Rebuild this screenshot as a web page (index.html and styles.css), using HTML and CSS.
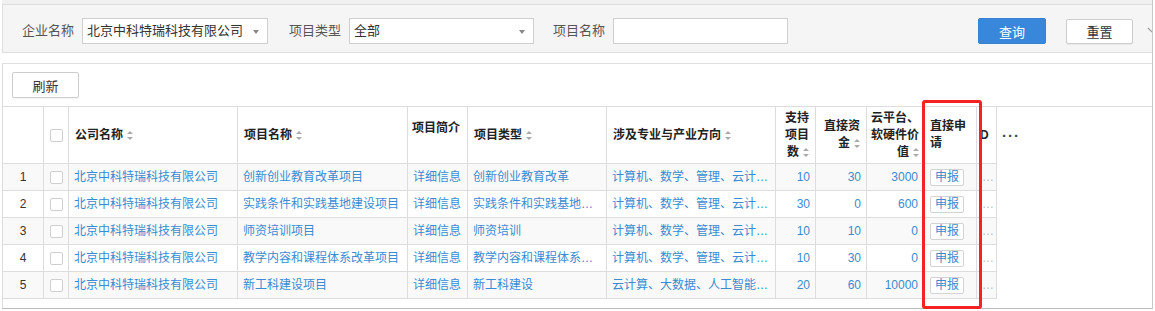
FILE: index.html
```html
<!DOCTYPE html>
<html lang="zh-CN">
<head>
  <meta charset="UTF-8" />
  <title>项目申报</title>
  <link rel="stylesheet" href="styles.css">
</head>
<body>
  <div class="page">
    <div class="topbar"></div>

    <div class="search">
      <label class="search-label">企业名称</label>
      <div class="select select-company"><span>北京中科特瑞科技有限公司</span><i class="caret"></i></div>
      <label class="search-label">项目类型</label>
      <div class="select select-type"><span>全部</span><i class="caret"></i></div>
      <label class="search-label">项目名称</label>
      <div class="input"></div>
      <button class="btn btn-primary">查询</button>
      <button class="btn btn-default btn-reset">重置</button>
      <svg class="chevron" width="12" height="8" viewBox="0 0 12 8"><polyline points="1,1 6,6 11,1" fill="none" stroke="#999" stroke-width="1.2"/></svg>
    </div>

    <div class="main">
      <div class="toolbar">
        <button class="btn btn-default btn-refresh">刷新</button>
      </div>

      <table class="grid">
        <colgroup>
          <col class="c-num"><col class="c-check"><col class="c-company"><col class="c-project">
          <col class="c-intro"><col class="c-type"><col class="c-field"><col class="c-support">
          <col class="c-fund"><col class="c-cloud"><col class="c-apply"><col class="c-d"><col class="c-more">
        </colgroup>
        <thead>
          <tr>
            <th></th>
            <th class="center"><span class="checkbox"></span></th>
            <th>公司名称<i class="sort"></i></th>
            <th>项目名称<i class="sort"></i></th>
            <th class="raised">项目简介</th>
            <th>项目类型<i class="sort"></i></th>
            <th>涉及专业与产业方向<i class="sort"></i></th>
            <th class="right">支持<br>项目<br>数<i class="sort"></i></th>
            <th class="right">直接资<br>金<i class="sort"></i></th>
            <th class="right tight">云平台、<br>软硬件价<br>值<i class="sort"></i></th>
            <th>直接申<br>请</th>
            <th class="th-d">D</th>
            <th class="th-more">···</th>
          </tr>
        </thead>
        <tbody>
          <tr>
            <td class="center idx">1</td>
            <td class="center"><span class="checkbox"></span></td>
            <td class="link">北京中科特瑞科技有限公司</td>
            <td class="link">创新创业教育改革项目</td>
            <td class="link">详细信息</td>
            <td class="link">创新创业教育改革</td>
            <td class="link" title="计算机、数学、管理、云计算、大数据">计算机、数学、管理、云计…</td>
            <td class="link right">10</td>
            <td class="link right">30</td>
            <td class="link right">3000</td>
            <td><button class="apply">申报</button></td>
            <td class="dots">…</td>
          </tr>
          <tr>
            <td class="center idx">2</td>
            <td class="center"><span class="checkbox"></span></td>
            <td class="link">北京中科特瑞科技有限公司</td>
            <td class="link">实践条件和实践基地建设项目</td>
            <td class="link">详细信息</td>
            <td class="link" title="实践条件和实践基地建设">实践条件和实践基地…</td>
            <td class="link" title="计算机、数学、管理、云计算、大数据">计算机、数学、管理、云计…</td>
            <td class="link right">30</td>
            <td class="link right">0</td>
            <td class="link right">600</td>
            <td><button class="apply">申报</button></td>
            <td class="dots">…</td>
          </tr>
          <tr>
            <td class="center idx">3</td>
            <td class="center"><span class="checkbox"></span></td>
            <td class="link">北京中科特瑞科技有限公司</td>
            <td class="link">师资培训项目</td>
            <td class="link">详细信息</td>
            <td class="link">师资培训</td>
            <td class="link" title="计算机、数学、管理、云计算、大数据">计算机、数学、管理、云计…</td>
            <td class="link right">10</td>
            <td class="link right">10</td>
            <td class="link right">0</td>
            <td><button class="apply">申报</button></td>
            <td class="dots">…</td>
          </tr>
          <tr>
            <td class="center idx">4</td>
            <td class="center"><span class="checkbox"></span></td>
            <td class="link">北京中科特瑞科技有限公司</td>
            <td class="link">教学内容和课程体系改革项目</td>
            <td class="link">详细信息</td>
            <td class="link" title="教学内容和课程体系改革">教学内容和课程体系…</td>
            <td class="link" title="计算机、数学、管理、云计算、大数据">计算机、数学、管理、云计…</td>
            <td class="link right">10</td>
            <td class="link right">30</td>
            <td class="link right">0</td>
            <td><button class="apply">申报</button></td>
            <td class="dots">…</td>
          </tr>
          <tr>
            <td class="center idx">5</td>
            <td class="center"><span class="checkbox"></span></td>
            <td class="link">北京中科特瑞科技有限公司</td>
            <td class="link">新工科建设项目</td>
            <td class="link">详细信息</td>
            <td class="link">新工科建设</td>
            <td class="link" title="云计算、大数据、人工智能、物联网">云计算、大数据、人工智能…</td>
            <td class="link right">20</td>
            <td class="link right">60</td>
            <td class="link right">10000</td>
            <td><button class="apply">申报</button></td>
            <td class="dots">…</td>
          </tr>
        </tbody>
      </table>
    </div>

    <div class="highlight"></div>
  </div>
</body>
</html>
```

FILE: styles.css
```css
* {
  box-sizing: border-box;
}

body {
  margin: 0;
  background-color: #fff;
  font-family: "Liberation Sans", "Noto Sans CJK SC", sans-serif;
  font-size: 12px;
  color: #333;
}

.page {
  position: relative;
  width: 1151px;
  height: 309px;
  margin-left: 2px;
  border-right: 1px solid #c8c8c8;
  border-bottom: 1px solid #bcbcbc;
}

.topbar {
  height: 4px;
  background-color: #f0f0f0;
}

/* search bar */
.search {
  display: flex;
  align-items: flex-start;
  height: 49px;
  padding: 13px 0 0 19px;
  background-color: #f5f5f5;
  border: 1px solid #dedede;
  border-right: none;
  overflow: hidden;
  font-size: 13px;
  white-space: nowrap;
}

.search > * {
  flex: none;
}

.search-label {
  line-height: 26px;
  color: #555;
  margin-right: 8px;
}

.select,
.input {
  position: relative;
  height: 26px;
  background-color: #fff;
  border: 1px solid #cfcfcf;
  line-height: 24px;
  padding-left: 4px;
  color: #333;
}

.select-company {
  width: 186px;
  margin-right: 21px;
}

.select-type {
  width: 185px;
  margin-right: 19px;
}

.input {
  width: 175px;
}

.caret {
  position: absolute;
  right: 8px;
  top: 11px;
  width: 0;
  height: 0;
  border-left: 3px solid transparent;
  border-right: 3px solid transparent;
  border-top: 4px solid #888;
}

.btn {
  height: 26px;
  padding: 0;
  font-family: inherit;
  font-size: 13px;
  border-radius: 2px;
  cursor: pointer;
}

.btn-primary {
  width: 68px;
  margin-left: 190px;
  background-color: #3887db;
  border: 1px solid #3a82cf;
  color: #fff;
}

.btn-default {
  background-color: #fff;
  border: 1px solid #cdcdcd;
  color: #333;
  box-shadow: 0 1px 1px rgba(0, 0, 0, 0.05);
}

.btn-reset {
  width: 67px;
  margin-left: 20px;
  margin-top: 1px;
  height: 25px;
}

.chevron {
  margin: 9px 0 0 14px;
}

/* table area */
.main {
  margin-top: 10px;
  border-top: 1px solid #e0e0e0;
  border-left: 1px solid #dcdcdc;
  height: 245px;
}

.toolbar {
  padding: 8px 0 8px 9px;
}

.btn-refresh {
  display: block;
  width: 67px;
}

.grid {
  width: 1149px;
  table-layout: fixed;
  border-collapse: separate;
  border-spacing: 0;
  border-top: 1px solid #ddd;
}

.c-num { width: 41px; }
.c-check { width: 25px; }
.c-company { width: 169px; }
.c-project { width: 170px; }
.c-intro { width: 60px; }
.c-type { width: 139px; }
.c-field { width: 169px; }
.c-support { width: 40px; }
.c-fund { width: 51px; }
.c-cloud { width: 57px; }
.c-apply { width: 53px; }
.c-d { width: 20px; }
.c-more { width: 155px; }

.grid th,
.grid td {
  border-right: 1px solid #ddd;
  border-bottom: 1px solid #ddd;
  white-space: nowrap;
  overflow: hidden;
  vertical-align: middle;
}

.grid th {
  height: 57px;
  padding: 0 6px;
  text-align: left;
  font-weight: 700;
  line-height: 17px;
  color: #222;
}

.grid td {
  height: 27px;
  padding: 0 5px;
  line-height: 16px;
}

.grid tbody tr:nth-child(odd) td {
  background-color: #f9f9f9;
}

.grid .center {
  text-align: center;
  padding: 0;
}

.grid .right {
  text-align: right;
}

.grid th.tight {
  padding: 0 4px;
}

.grid th.raised {
  padding: 0 0 13px 4px;
}

.grid th.th-d {
  padding: 0 0 0 3px;
}

.grid th.th-more {
  border-right: none;
  border-bottom: none;
  padding-left: 5px;
  font-size: 15px;
  letter-spacing: 1px;
  color: #444;
}

.idx {
  color: #333;
}

.link {
  color: #3a8bd2;
}

.dots {
  color: #bbb;
}

.grid td.dots {
  padding: 0 0 0 5px;
}

.sort {
  display: inline-block;
  position: relative;
  width: 6px;
  height: 9px;
  margin-left: 4px;
  vertical-align: -1px;
}

.sort::before,
.sort::after {
  content: "";
  position: absolute;
  left: 0;
  border-left: 3px solid transparent;
  border-right: 3px solid transparent;
}

.sort::before {
  top: 0;
  border-bottom: 3px solid #aaa;
}

.sort::after {
  bottom: 0;
  border-top: 3px solid #aaa;
}

.checkbox {
  display: inline-block;
  width: 13px;
  height: 13px;
  border: 1px solid #cfcfcf;
  border-radius: 2px;
  background-color: #fff;
  vertical-align: middle;
}

.apply {
  display: block;
  height: 17px;
  padding: 0 4px;
  margin-left: 1px;
  background-color: #fff;
  border: 1px solid #d3d3d3;
  border-radius: 2px;
  font-family: inherit;
  font-size: 12px;
  line-height: 15px;
  color: #3a8bd2;
  cursor: pointer;
}

/* red annotation frame */
.highlight {
  position: absolute;
  left: 920px;
  top: 100px;
  width: 60px;
  height: 209px;
  border: 3px solid #f52222;
  border-radius: 3px;
}
```
